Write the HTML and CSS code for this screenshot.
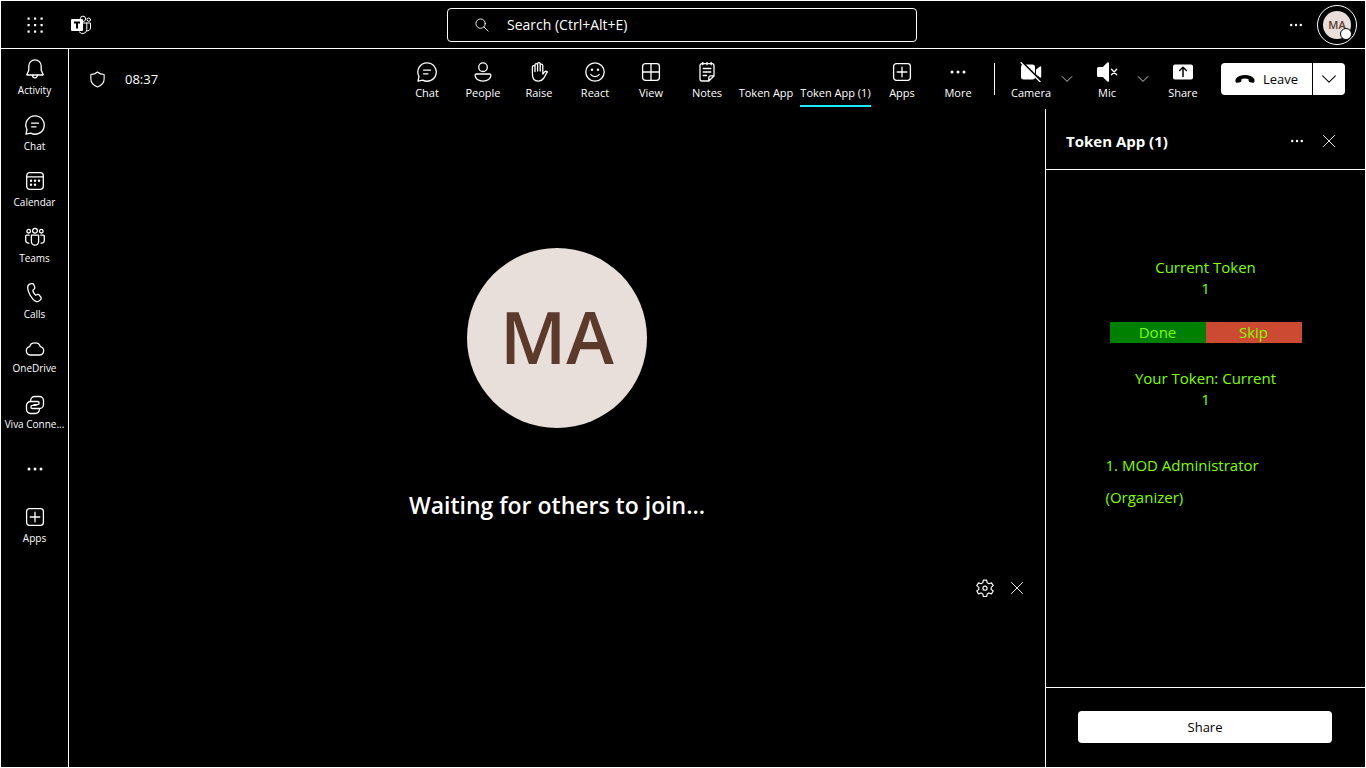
FILE: index.html
```html
<!DOCTYPE html>
<html lang="en">
<head>
<meta charset="utf-8">
<title>Meeting</title>
<link rel="stylesheet" href="styles.css">
</head>
<body>
<svg class="sprite" aria-hidden="true">
  <symbol id="chat" viewBox="0 0 20 20"><path d="M10 .8a9.2 9.2 0 1 1-4.3 17.3L1 19.2l1-4.7A9.2 9.2 0 0 1 10 .8Z"/><path d="M6.6 8.2h6.8M6.6 11.8h4.4"/></symbol>
  <symbol id="bell" viewBox="0 0 20 20"><path d="M10 .8a6.2 6.2 0 0 0-6.2 6.2v4.2L1.9 15.4a.4.4 0 0 0 .4.6h15.4a.4.4 0 0 0 .4-.6l-1.9-4.2V7A6.2 6.2 0 0 0 10 .8Z"/><path d="M7.6 16.2a2.4 2.6 0 0 0 4.8 0"/></symbol>
  <symbol id="calendar" viewBox="0 0 20 20"><rect x="1.7" y="1.7" width="16.6" height="16.6" rx="3"/><path d="M1.7 5.8h16.6"/><g class="solid"><circle cx="6" cy="9.7" r="1.2"/><circle cx="10" cy="9.7" r="1.2"/><circle cx="14" cy="9.7" r="1.2"/><circle cx="6" cy="13.7" r="1.2"/><circle cx="10" cy="13.7" r="1.2"/></g></symbol>
  <symbol id="teams" viewBox="0 0 20 20"><circle cx="10" cy="3.7" r="2.4"/><circle cx="3.7" cy="4.2" r="1.8"/><circle cx="16.3" cy="4.2" r="1.8"/><path d="M6.4 8.2h7.2v6.4a3.6 3.6 0 0 1-7.2 0ZM4.2 8.2H1.6c-.5 0-.9.4-.9.9v4.4c0 1.7 1.5 2.9 3.3 2.6M15.8 8.2h2.6c.5 0 .9.4.9.9v4.4c0 1.7-1.5 2.9-3.3 2.6"/></symbol>
  <symbol id="phone" viewBox="0 0 20 20"><path d="m5.3.9 1.2-.3c1.1-.3 1.9.2 2.3 1.2l.8 2c.4.9.2 1.6-.5 2.3L7.8 7.4c.2 1.8 1.1 3.3 2.6 4.7l1.8-.5c.9-.3 1.7-.1 2.3.7l1.3 1.8c.6.8.6 1.7-.1 2.4l-.9.9c-1.1 1.2-2.5 1.6-4.1.9C7 16.6 2.3 8.6 2.7 4.1 2.8 2.4 3.7 1.3 5.3.9Z"/></symbol>
  <symbol id="cloud" viewBox="0 0 20 20"><path d="M5.2 16a4.2 4.2 0 0 1-.5-8.3C5.2 5.1 7.3 3.8 10 3.8s4.800 1.300 5.300 3.900a4.200 4.200 0 0 1-.5 8.300Z"/></symbol>
  <symbol id="viva" viewBox="0 0 20 20"><path d="M5.500 6.200C5.500 3 7.500 1.500 10 1.500h4.500a4 4 0 0 1 4 4v4a4 4 0 0 1-4 4h-7a1.600 1.600 0 0 1 0-3.200H11"/><path d="M14.500 13.800c0 3.200-2 4.700-4.500 4.700H5.500a4 4 0 0 1-4-4v-4a4 4 0 0 1 4-4h7a1.600 1.600 0 0 1 0 3.200H9"/></symbol>
  <symbol id="dots" viewBox="0 0 20 20"><g class="solid"><circle cx="4" cy="10" r="1.500"/><circle cx="10" cy="10" r="1.500"/><circle cx="16" cy="10" r="1.500"/></g></symbol>
  <symbol id="apps" viewBox="0 0 20 20"><rect x="1.600" y="1.600" width="16.800" height="16.800" rx="2.800"/><path d="M10 5.200v9.600M5.200 10h9.600"/></symbol>
  <symbol id="person" viewBox="0 0 20 20"><circle cx="10" cy="5.200" r="4.300"/><path d="M3.500 12h13c.8 0 1.400.5 1.400 1.300 0 3.500-3.400 5.800-7.900 5.800s-7.900-2.300-7.900-5.800c0-.8.6-1.300 1.400-1.300Z"/></symbol>
  <symbol id="hand" viewBox="0 0 20 20"><path d="M3.400 11.500V5a1.300 1.300 0 0 1 2.600 0v4.500V3a1.300 1.300 0 0 1 2.600 0v6V2a1.300 1.300 0 0 1 2.600 0v7V3.500a1.300 1.300 0 0 1 2.600 0V12l1.600-1.900c.7-.8 1.800-1 2.700-.4l.3.200c-1.500 2.100-2.300 4.400-3.900 6.600-1.400 1.900-3 2.700-5.300 2.700-4 0-5.800-2.500-5.800-7.700Z"/></symbol>
  <symbol id="smile" viewBox="0 0 20 20"><circle cx="10" cy="10" r="9.200"/><path d="M5.800 12.500c1.900 2.800 6.500 2.800 8.400 0"/><g class="solid"><circle cx="7" cy="7.800" r="1.200"/><circle cx="13" cy="7.800" r="1.200"/></g></symbol>
  <symbol id="view" viewBox="0 0 20 20"><rect x="1.600" y="1.600" width="16.800" height="16.800" rx="2.800"/><path d="M10 1.600v16.800M1.600 10h16.800"/></symbol>
  <symbol id="notes" viewBox="0 0 20 20"><path d="M11.800 19H5a2 2 0 0 1-2-2V3.700a2 2 0 0 1 2-2h10a2 2 0 0 1 2 2V14ZM17 13.800h-3.200a2 2 0 0 0-2 2V19M5.800.3v2.500M10 .3v2.500M14.200.3v2.500M6.200 6.500h7.600M6.200 10h7.600M6.200 13.500h3.300"/></symbol>
  <symbol id="camera" viewBox="0 0 22 20"><path class="solid" d="M3.500 2.500h9A2.500 2.500 0 0 1 15 5v10a2.500 2.500 0 0 1-2.500 2.500h-9A2.500 2.500 0 0 1 1 15V5a2.500 2.500 0 0 1 2.500-2.500ZM16 7.500l4-3c.6-.4 1.200 0 1.200.6v9.800c0 .6-.6 1-1.200.6l-4-3Z"/><path class="gap" d="M2.300.3 21.500 19.500"/><path d="M1.100.8 20.300 20"/></symbol>
  <symbol id="mic" viewBox="0 0 22 20"><path class="solid" d="M13 1.200v17.600c0 .9-.9 1.300-1.600.7L6.800 15H2.500A1.500 1.500 0 0 1 1 13.500v-7A1.500 1.500 0 0 1 2.500 5h4.300L11.400.5c.7-.6 1.600-.2 1.600.7Z"/><path d="m15.500 7.200 5.200 5.600m0-5.600-5.200 5.600"/></symbol>
  <symbol id="share" viewBox="0 0 20 20"><rect class="solid" x="0" y="2.500" width="20" height="15" rx="2"/><path class="ink" d="M10 14.500v-9M6.600 8.500 10 5.200l3.400 3.300"/></symbol>
  <symbol id="hangup" viewBox="0 0 20 20"><path class="solid" d="M10 6c4 0 7.400 1.500 8.900 3.500.7 1 .8 2.200.5 3.300-.2.800-.8 1.200-1.600 1l-2.900-.6c-.7-.1-1.100-.6-1.200-1.200l-.3-2c-2.200-.8-4.600-.8-6.800 0l-.3 2c-.1.600-.5 1.100-1.200 1.200l-2.900.6c-.8.200-1.400-.2-1.600-1-.3-1.100-.2-2.300.5-3.300C2.600 7.500 6 6 10 6Z"/></symbol>
  <symbol id="chevron" viewBox="0 0 20 20"><path d="m2 6 8 8 8-8"/></symbol>
  <symbol id="close" viewBox="0 0 20 20"><path d="m2 2 16 16m0-16-16 16"/></symbol>
  <symbol id="search" viewBox="0 0 20 20"><circle cx="8" cy="8" r="6.700"/><path d="m12.800 12.800 6 6"/></symbol>
  <symbol id="shield" viewBox="0 0 20 20"><path d="M10 1.200c2.200 1.900 4.500 2.800 7.800 3v5.300c0 4.400-2.800 7.500-7.800 9.400-5-1.900-7.800-5-7.800-9.400V4.200c3.300-.2 5.600-1.100 7.800-3Z"/></symbol>
  <symbol id="gear" viewBox="0 0 20 20"><path d="M8.200 1.200h3.600l.6 2.900c.9.400 1.300.6 2 1.200l2.800-1 1.900 3.100-2.300 1.900c.1.900.1 1.300 0 2.200l2.300 1.900-1.900 3.100-2.800-1c-.7.600-1.100.8-2 1.200l-.6 2.900H8.200l-.6-2.900c-.9-.4-1.300-.6-2-1.200l-2.800 1-1.900-3.100 2.300-1.900c-.1-.9-.1-1.300 0-2.200L.9 7.400l1.900-3.100 2.800 1c.7-.6 1.100-.8 2-1.200Z"/><circle cx="10" cy="10.200" r="2.300"/></symbol>
  <symbol id="waffle" viewBox="0 0 20 20"><g class="solid"><rect x="2.500" y="2.500" width="2.200" height="2.200"/><rect x="9" y="2.500" width="2.200" height="2.200"/><rect x="15.500" y="2.500" width="2.200" height="2.200"/><rect x="2.500" y="9" width="2.200" height="2.200"/><rect x="9" y="9" width="2.200" height="2.200"/><rect x="15.500" y="9" width="2.200" height="2.200"/><rect x="2.500" y="15.500" width="2.200" height="2.200"/><rect x="9" y="15.500" width="2.200" height="2.200"/><rect x="15.500" y="15.500" width="2.200" height="2.200"/></g></symbol>
  <symbol id="logo" viewBox="0 0 20 20"><g class="fine"><circle cx="12" cy="3.800" r="2.700"/><circle cx="17.800" cy="4.700" r="1.700"/><path d="M12 8h7.500v5a3 3 0 0 1-3.500 2.900M15.800 8v6.300A4.200 4.200 0 0 1 8.300 17"/></g><rect class="solid" x="0" y="4" width="12" height="12" rx="1"/><path class="bar" d="M3 7.500h6M6 7v6.500"/></symbol>
</svg>

<div class="app">
  <header class="topbar">
    <div class="brand">
      <button class="icon-btn" aria-label="App launcher"><svg class="icon"><use href="#waffle"/></svg></button>
      <svg class="icon" role="img" aria-label="Teams"><use href="#logo"/></svg>
    </div>
    <label class="search">
      <svg class="icon small"><use href="#search"/></svg>
      <input type="search" placeholder="Search (Ctrl+Alt+E)" aria-label="Search">
    </label>
    <div class="account">
      <button class="icon-btn" aria-label="Settings and more"><svg class="icon dots"><use href="#dots"/></svg></button>
      <button class="profile" aria-label="Profile"><span class="profile-face">MA</span><span class="presence"></span></button>
    </div>
  </header>

  <nav class="rail" aria-label="Apps">
    <a href="#" class="rail-item"><svg class="icon"><use href="#bell"/></svg>Activity</a>
    <a href="#" class="rail-item"><svg class="icon"><use href="#chat"/></svg>Chat</a>
    <a href="#" class="rail-item"><svg class="icon"><use href="#calendar"/></svg>Calendar</a>
    <a href="#" class="rail-item"><svg class="icon"><use href="#teams"/></svg>Teams</a>
    <a href="#" class="rail-item"><svg class="icon"><use href="#phone"/></svg>Calls</a>
    <a href="#" class="rail-item tight"><svg class="icon"><use href="#cloud"/></svg>OneDrive</a>
    <a href="#" class="rail-item tight"><svg class="icon"><use href="#viva"/></svg>Viva Conne...</a>
    <button class="rail-item more" aria-label="More apps"><svg class="icon"><use href="#dots"/></svg></button>
    <a href="#" class="rail-item"><svg class="icon"><use href="#apps"/></svg>Apps</a>
  </nav>

  <main class="meeting">
    <div class="toolbar">
      <div class="status"><svg class="icon shield"><use href="#shield"/></svg><span>08:37</span></div>
      <div class="tools">
        <button class="tool"><svg class="icon"><use href="#chat"/></svg><span>Chat</span></button>
        <button class="tool"><svg class="icon"><use href="#person"/></svg><span>People</span></button>
        <button class="tool"><svg class="icon"><use href="#hand"/></svg><span>Raise</span></button>
        <button class="tool"><svg class="icon"><use href="#smile"/></svg><span>React</span></button>
        <button class="tool"><svg class="icon"><use href="#view"/></svg><span>View</span></button>
        <button class="tool"><svg class="icon"><use href="#notes"/></svg><span>Notes</span></button>
        <button class="tool app-tab"><span>Token App</span></button>
        <button class="tool app-tab wide active"><span>Token App (1)</span></button>
        <button class="tool"><svg class="icon"><use href="#apps"/></svg><span>Apps</span></button>
        <button class="tool"><svg class="icon"><use href="#dots"/></svg><span>More</span></button>
      </div>
      <div class="devices">
        <button class="tool"><svg class="icon device"><use href="#camera"/></svg><span>Camera</span></button>
        <button class="expand" aria-label="Camera options"><svg class="icon tiny"><use href="#chevron"/></svg></button>
        <button class="tool"><svg class="icon device"><use href="#mic"/></svg><span>Mic</span></button>
        <button class="expand" aria-label="Mic options"><svg class="icon tiny"><use href="#chevron"/></svg></button>
        <button class="tool"><svg class="icon"><use href="#share"/></svg><span>Share</span></button>
      </div>
      <div class="leave">
        <button class="leave-main"><svg class="icon"><use href="#hangup"/></svg>Leave</button>
        <button class="leave-more" aria-label="Leave options"><svg class="icon dots"><use href="#chevron"/></svg></button>
      </div>
    </div>

    <section class="stage">
      <div class="tile">
        <div class="avatar">MA</div>
        <h1 class="waiting">Waiting for others to join...</h1>
      </div>
      <div class="self-view">
        <button class="icon-btn" aria-label="Settings"><svg class="icon gear"><use href="#gear"/></svg></button>
        <button class="icon-btn" aria-label="Close"><svg class="icon small"><use href="#close"/></svg></button>
      </div>
    </section>

    <aside class="panel">
      <header class="panel-head">
        <h2>Token App (1)</h2>
        <button class="icon-btn" aria-label="More options"><svg class="icon dots"><use href="#dots"/></svg></button>
        <button class="icon-btn" aria-label="Close panel"><svg class="icon small"><use href="#close"/></svg></button>
      </header>
      <div class="token">
        <div class="readout"><div>Current Token</div><div>1</div></div>
        <div class="actions"><button class="done">Done</button><button class="skip">Skip</button></div>
        <div class="readout"><div>Your Token: Current</div><div>1</div></div>
        <div class="queue">1. MOD Administrator (Organizer)</div>
      </div>
      <footer class="panel-foot"><button class="share-btn">Share</button></footer>
    </aside>
  </main>
</div>
</body>
</html>
```
FILE: styles.css
```css
* { box-sizing: border-box; }

body {
  margin: 0;
  background: #000;
  color: #fff;
  font-family: "Open Sans", "Noto Sans", sans-serif;
  font-size: 13px;
}

button, a, input {
  font: inherit;
  color: inherit;
  text-decoration: none;
}

button {
  background: none;
  border: 0;
  padding: 0;
}

.sprite { position: absolute; width: 0; height: 0; }

.icon {
  display: block;
  flex: none;
  width: 20px;
  height: 20px;
  fill: none;
  stroke: currentColor;
  stroke-width: 1.3;
  stroke-linejoin: round;
  stroke-linecap: round;
}
.icon.small { width: 14px; height: 14px; }
.icon.tiny { width: 12px; height: 12px; }
.icon.dots { width: 16px; height: 16px; }
.icon.shield { width: 17px; height: 17px; }
.icon.gear { width: 18px; height: 18px; }
.icon.device { width: 22px; }
.solid { fill: currentColor; stroke: none; }
.fine { stroke-width: 1; }
.gap { stroke: #000; stroke-width: 2; }
.ink { stroke: #000; stroke-width: 1.5; }
.bar { stroke: #000; stroke-width: 2; stroke-linecap: butt; }

.app {
  display: grid;
  grid-template: 48px 1fr / 68px 1fr;
  min-height: 100vh;
  border: 1px solid #fff;
}

.topbar {
  grid-column: 1 / -1;
  display: grid;
  grid-template-columns: 1fr minmax(200px, 470px) 1fr;
  align-items: center;
  padding-right: 2px;
  border-bottom: 1px solid #fff;
}
.brand { display: flex; align-items: center; gap: 20px; padding-left: 18px; }
.icon-btn {
  display: grid;
  place-items: center;
  width: 32px;
  height: 32px;
}
.search {
  display: flex;
  align-items: center;
  gap: 18px;
  height: 34px;
  padding: 0 27px;
  border: 1px solid #fff;
  border-radius: 4px;
  font-size: 14px;
}
.search input {
  flex: 1;
  min-width: 0;
  padding: 0;
  border: 0;
  outline: 0;
  background: none;
}
.search input::placeholder { color: #fff; opacity: 1; }
.account { display: flex; justify-content: flex-end; align-items: center; gap: 5px; padding-right: 6px; }
.profile {
  position: relative;
  display: grid;
  place-items: center;
  width: 40px;
  height: 40px;
  border: 1px solid #fff;
  border-radius: 50%;
}
.profile-face {
  display: grid;
  place-items: center;
  width: 28px;
  height: 28px;
  border-radius: 50%;
  background: #e8deda;
  color: #5b3a2b;
  font-size: 11px;
  font-weight: 600;
}
.presence {
  position: absolute;
  right: 4px;
  bottom: 4px;
  width: 12px;
  height: 12px;
  border: 1px solid #000;
  border-radius: 50%;
  background: #fff;
}

.rail {
  display: flex;
  flex-direction: column;
  border-right: 1px solid #fff;
}
.rail-item {
  display: flex;
  flex-direction: column;
  align-items: center;
  gap: 4px;
  height: 56px;
  padding-top: 10px;
  font-size: 10px;
  line-height: 14px;
  white-space: nowrap;
}
.rail-item.tight { gap: 2px; }
.rail-item.more { justify-content: center; padding: 0; }

.meeting {
  display: grid;
  grid-template: 60px 1fr / 1fr 320px;
  min-width: 0;
}
.toolbar {
  grid-column: 1 / -1;
  display: flex;
  padding-right: 20px;
}
.status {
  display: flex;
  align-items: center;
  gap: 19px;
  padding-left: 20px;
  margin-right: auto;
}
.tools, .devices { display: flex; }
.tool {
  display: flex;
  flex-direction: column;
  align-items: center;
  gap: 4px;
  width: 56px;
  padding-top: 13px;
  font-size: 11px;
  line-height: 14px;
  white-space: nowrap;
}
.app-tab { width: 62px; padding-top: 37px; }
.app-tab.wide { width: 77px; }
.active span { padding-bottom: 5px; border-bottom: 2px solid #1aebff; }
.devices {
  margin: 0 10px 0 8px;
}
.devices::before {
  content: "";
  width: 1px;
  height: 32px;
  margin: 14px 8px 0 0;
  background: #fff;
}
.expand { width: 20px; display: grid; place-items: center; padding-right: 4px; }
.leave {
  display: flex;
  gap: 1px;
  align-self: center;
  height: 32px;
  color: #000;
}
.leave-main, .leave-more {
  display: flex;
  align-items: center;
  justify-content: center;
  background: #fff;
}
.leave-main { gap: 8px; width: 91px; border-radius: 4px 0 0 4px; }
.leave-more { width: 32px; border-radius: 0 4px 4px 0; }

.stage { display: flex; flex-direction: column; }
.tile {
  flex: 1;
  display: grid;
  grid-template-rows: 1fr auto 1fr;
  justify-items: center;
}
.avatar {
  grid-row: 2;
  display: grid;
  place-items: center;
  width: 180px;
  height: 180px;
  border-radius: 50%;
  background: #e8deda;
  color: #5b3a2b;
  font-size: 72px;
  font-weight: 600;
  line-height: 96px;
  padding-bottom: 4px;
}
.waiting {
  grid-row: 3;
  margin: 61px 0 0;
  font-size: 23px;
  font-weight: 600;
  line-height: 32px;
}
.self-view {
  display: flex;
  justify-content: flex-end;
  min-height: 200px;
  padding: 5px 12px;
}

.panel {
  display: flex;
  flex-direction: column;
  border-left: 1px solid #fff;
}
.panel-head {
  display: flex;
  align-items: center;
  height: 61px;
  padding: 4px 20px 0;
  border-bottom: 1px solid #fff;
}
.panel-head h2 { flex: 1; margin: 0; font-size: 15px; font-weight: 700; }
.token {
  flex: 1;
  display: flex;
  flex-direction: column;
  align-items: center;
  padding-top: 87px;
  color: #7fff00;
  font-size: 15px;
  line-height: 21px;
  text-align: center;
}
.actions { display: flex; width: 192px; margin: 23px 0 25px; }
.actions button { flex: 1; line-height: 21px; }
.done { background: #008000; }
.skip { background: #cc4a31; }
.queue { width: 200px; margin-top: 39px; line-height: 32px; text-align: left; }
.panel-foot { display: flex; padding: 23px 33px 24px 32px; border-top: 1px solid #fff; }
.share-btn {
  flex: 1;
  height: 32px;
  border-radius: 4px;
  background: #fff;
  color: #000;
}
```
